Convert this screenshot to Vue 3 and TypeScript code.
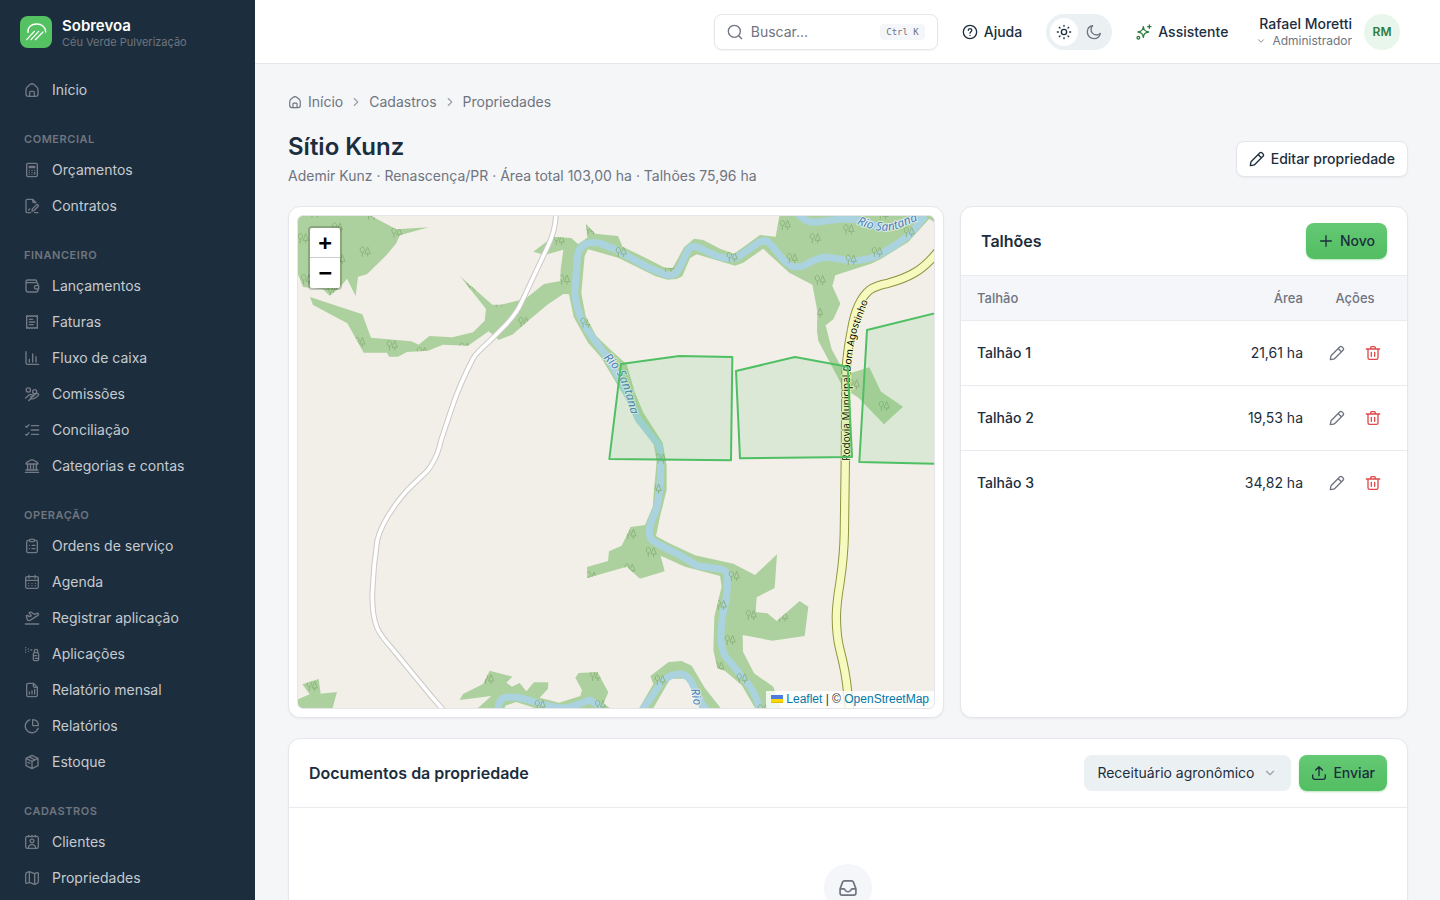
<script setup lang="ts">
import { ref } from 'vue'

interface NavItem {
  label: string
  icon: string
}
interface NavSection {
  title: string
  items: NavItem[]
}
interface Plot {
  name: string
  area: string
}

const circle = (cx: number, cy: number, r: number): string =>
  `M${cx - r} ${cy}a${r} ${r} 0 1 0 ${2 * r} 0a${r} ${r} 0 1 0 ${-2 * r} 0`

const icons: Record<string, string> = {
  home: 'M3 11.5c0-2 .4-2.9 1.9-4.1l4.2-3.5c2.3-1.9 3.5-1.9 5.8 0l4.2 3.5c1.5 1.2 1.9 2.1 1.9 4.1V18c0 2.5-1.3 3.5-3.5 3.5h-11C4.3 21.5 3 20.5 3 18zM8.5 21.5v-6c0-1 .5-1.5 1.5-1.5h4c1 0 1.5.5 1.5 1.5v6',
  calculator: 'M6 2h12c1.3 0 2 .7 2 2v16c0 1.3-.7 2-2 2H6c-1.3 0-2-.7-2-2V4c0-1.3.7-2 2-2zM8 6.5h8v2H8zM8 12.5h.01M12 12.5h.01M16 12.5h.01M8 15.5h.01M12 15.5h.01M16 15.5v2.5M8 18.5h.01M12 18.5h.01',
  contract: 'M10 22H5c-1.3 0-2-.7-2-2V4c0-1.3.7-2 2-2h8l5 5M13 2v3c0 1.3.7 2 2 2h3M7 18l1.5-1.5M21 22h-5M12 19.5l.6-3.2 6-6c1.5-1.4 3.9.9 2.5 2.5l-6 6z',
  wallet: 'M3 5.5C3 4 4 3 5.5 3H17c1.2 0 2 .8 2 2v2H4.5C3.6 7 3 6.4 3 5.5zv12C3 20 4 21 6.5 21H18c2 0 3-1 3-3v-1.5M21 11.5V10c0-2-1-3-3-3M22 11.5h-4a2.5 2.5 0 0 0 0 5h4z',
  invoice: 'M4 21.5V2.5l2 1.3 2-1.3 2 1.3 2-1.3 2 1.3 2-1.3 2 1.3 2-1.3v19l-2-1.3-2 1.3-2-1.3-2 1.3-2-1.3-2 1.3-2-1.3zM8 8h5M8 12h8M8 16h6',
  chart: 'M3 2.5V19c0 1.7.8 2.5 2.5 2.5H22M8 14v4M13 6v12M18 10v8',
  coins: circle(6.5, 6, 3.2) + circle(16, 8.5, 3) + 'M2.5 18l5-4.5c2-1.5 4-.5 6 0 1.5.4 1.5 2.5-.5 2.5h-3M13 15.5l5.5-4c2-1.4 4.5.5 3 2.5-2 2.5-5 5-8 5.2-2 .1-3.5-.4-5 1.3L7 22z',
  checks: 'M11 5.5h11M11 12h11M11 18.5h11M2.5 6.5L4 8l3.5-4M2.5 18.5L4 20l3.5-4',
  bank: 'M2 21.5h20M3 9h18c0-1.5-.3-2-1.5-2.7L13.5 3c-1.2-.6-1.8-.6-3 0l-6 3.3C3.3 7 3 7.5 3 9zM5.5 9v9M9.8 9v9M14.2 9v9M18.5 9v9M3 18h18',
  clipboard: 'M8 3.5H6.5C5 3.5 4 4.5 4 6v13.5C4 21 5 22 6.5 22h11c1.5 0 2.5-1 2.5-2.5V6c0-1.5-1-2.5-2.5-2.5H16M9.5 2h5C15.5 2 16 2.5 16 3.5S15.5 5.5 14.5 5.5h-5C8.5 5.5 8 4.5 8 3.5S8.5 2 9.5 2zM8 11h.01M8 16h.01M12 11h4.5M12 16h4.5',
  calendar: 'M5 4h14c1.5 0 2.5 1 2.5 2.5V19c0 1.5-1 2.5-2.5 2.5H5c-1.5 0-2.5-1-2.5-2.5V6.5C2.5 5 3.5 4 5 4zM7.5 2v4M16.5 2v4M2.5 9.5h19M7 14h.01M12 14h.01M17 14h.01M7 17.5h.01M12 17.5h.01M17 17.5h.01',
  plane: 'M2 21h20M3.5 8.5l1.5-.5 3 2 3-1.3L7.5 4 10 3l6 3.5 3.5-1.4c2-.8 3.5 1.6 1.3 3L9 15.5c-1.8.9-3.2.5-4-1z',
  spray: 'M14 12.5c0-1.8.9-2.5 2.5-2.5h3c1.6 0 2.5.7 2.5 2.5V20c0 1.3-.7 2-2 2h-4c-1.3 0-2-.7-2-2zM15.5 10V7c0-1.3.5-2 2.5-2s2.5.7 2.5 2v3M14 14.5h5M17 18.5h5M2.5 2.5h.01M2.5 6h.01M2.5 9.5h.01M6.5 4.5h.01M6.5 8h.01M10.5 6h1',
  fileChart: 'M6.5 2H14l6 6v11.5c0 1.5-1 2.5-2.5 2.5h-11C5 22 4 21 4 19.5v-15C4 3 5 2 6.5 2zM14 2v4c0 1.3.7 2 2 2h4M8 15v3M12 13v5M16 11v7',
  pie: 'M8.5 2.7a10 10 0 1 0 12.8 12.8M13 2.5v8c0 .6.3.9.9.9h7.6C21.5 6 18.5 2.8 13 2.5z',
  box: 'M12 2l9 4.5v11L12 22l-9-4.5v-11zM3 6.5l9 4.5 9-4.5M12 11v11M7.5 4.3l9 4.5M6 12.5l2.5 1.2',
  contact: 'M5 3.5h14c1.5 0 2.5 1 2.5 2.5v13c0 1.5-1 2.5-2.5 2.5H5c-1.5 0-2.5-1-2.5-2.5V6c0-1.5 1-2.5 2.5-2.5zM7 2v2.5M17 2v2.5M12 2v2.5M6.5 21c.5-4 2.5-5 5.5-5s5 1 5.5 5' + circle(12, 10.5, 2.8),
  map: 'M2.5 7c0-2 .5-2.7 2-3.4L8 2.5l8 3 3-1.2c1.8-.7 2.5-.2 2.5 1.5V17c0 1.8-.5 2.5-2 3.2L16 21.5l-8-3-3 1.2c-1.8.7-2.5.2-2.5-1.5zM8 2.5v16M16 5.5v16',
  search: circle(11, 11, 9) + 'M17.5 17.5l4.5 4.5',
  help: circle(12, 12, 10) + 'M9.5 9.5c0-3.4 5.2-3.2 5.2 0 0 2-2.7 2.1-2.7 4.3M12 17.2h.01',
  sun: circle(12, 12, 4) + 'M12 2v1.5M12 20.5V22M2 12h1.5M20.5 12H22M5 5l1 1M18 18l1 1M19 5l-1 1M6 18l-1 1',
  moon: 'M21.5 14.1A7.5 7.5 0 0 1 9.9 2.5C5.4 3.4 2 7.2 2 12c0 5.5 4.5 10 10 10 4.8 0 8.6-3.4 9.5-7.9z',
  sparkle: 'M11 4c.8 5.5 2.5 7.2 8 8-5.5.8-7.2 2.5-8 8-.8-5.5-2.5-7.2-8-8 5.5-.8 7.2-2.5 8-8zM20 1.5v5M17.5 4h5' + circle(3.5, 20.5, 2),
  chevronDown: 'M6 9l6 6 6-6',
  chevronRight: 'M9 6l6 6-6 6',
  pencil: 'M2 22l.8-5c.1-.7.4-1.200.9-1.700L16 3c1.200-1.200 2.500-1.200 3.700 0l1.300 1.300c1.200 1.200 1.200 2.500 0 3.700L8.700 20.300c-.5.5-1 .8-1.700.9zM14 5.500l4.500 4.500',
  trash: 'M19.5 6v13c0 1.7-1 2.5-2.5 2.5H7c-1.5 0-2.5-.8-2.5-2.5V6M2 6h20M8.500 6V4c0-1 .5-1.500 1.500-1.500h4c1 0 1.500.5 1.500 1.500v2M9.500 11v6M14.500 11v6',
  plus: 'M12 4v16M4 12h16',
  upload: 'M12 16V3M7 7.5L12 2.5l5 5M2.5 15v3c0 2.3 1.2 3.5 3.5 3.5h12c2.3 0 3.5-1.2 3.5-3.5v-3',
  inbox: 'M2.5 13l3-8c.5-1.3 1-1.5 2.3-1.5h8.4c1.3 0 1.8.2 2.3 1.5l3 8v5c0 1.7-.8 2.5-2.5 2.5H5c-1.7 0-2.5-.8-2.5-2.5zM2.5 13H7c1.5 0 1.5 3.5 5 3.5s3.5-3.5 5-3.5h4.5',
}

const sections: NavSection[] = [
  {
    title: 'Comercial',
    items: [
      { label: 'Orçamentos', icon: 'calculator' },
      { label: 'Contratos', icon: 'contract' },
    ],
  },
  {
    title: 'Financeiro',
    items: [
      { label: 'Lançamentos', icon: 'wallet' },
      { label: 'Faturas', icon: 'invoice' },
      { label: 'Fluxo de caixa', icon: 'chart' },
      { label: 'Comissões', icon: 'coins' },
      { label: 'Conciliação', icon: 'checks' },
      { label: 'Categorias e contas', icon: 'bank' },
    ],
  },
  {
    title: 'Operação',
    items: [
      { label: 'Ordens de serviço', icon: 'clipboard' },
      { label: 'Agenda', icon: 'calendar' },
      { label: 'Registrar aplicação', icon: 'plane' },
      { label: 'Aplicações', icon: 'spray' },
      { label: 'Relatório mensal', icon: 'fileChart' },
      { label: 'Relatórios', icon: 'pie' },
      { label: 'Estoque', icon: 'box' },
    ],
  },
  {
    title: 'Cadastros',
    items: [
      { label: 'Clientes', icon: 'contact' },
      { label: 'Propriedades', icon: 'map' },
    ],
  },
]

const plots: Plot[] = [
  { name: 'Talhão 1', area: '21,61 ha' },
  { name: 'Talhão 2', area: '19,53 ha' },
  { name: 'Talhão 3', area: '34,82 ha' },
]

const query = ref('')
const docType = ref('Receituário agronômico')
const theme = ref<'light' | 'dark'>('light')

// Map geometry, in the units of the canvas viewBox.
const forest = [
  'M30 30H250L325 70 422 64 335 88 325 112 295 148 237 205 210 212 203 270 177 218 155 245 125 269 105 250 45 243 30 205Z',
  'M66 273L223 325 249 395 370 406 392 416 424 390 493 394 555 379 590 344 594 309 516 211 613 296 640 296 712 278 768 234 817 225 818 190 826 131 770 147 736 137 795 92 850 96 870 114 898 95 894 54 922 83 990 90 1004 122 1066 152 1131 185 1154 186 1188 124 1218 98 1246 102 1296 128 1338 143 1416 87 1463 92 1474 30H1938V48L1924 38 1861 108 1779 159 1749 173 1642 208 1633 240 1657 293 1636 340 1613 358 1631 430 1654 472 1691 500 1744 484 1779 557 1845 602 1788 655 1711 575 1666 545 1591 405 1587 375 1588 315 1573 236 1504 200 1446 148 1426 128 1366 170 1341 179 1226 145 1206 157 1183 211 1166 219 1138 221 1101 210 1036 178 990 155 900 130 890 150 880 262 893 330 925 390 966 430 1016 475 1041 560 1066 620 1124 710 1136 780 1136 852 1116 932 1104 990 1141 1010 1221 1048 1336 1073 1401 1107 1467 1045 1460 1146 1406 1174 1403 1218 1438 1222 1466 1245 1535 1185 1561 1202 1550 1290 1453 1304 1364 1287 1365 1337 1398 1402 1456 1442 1478 1506H1401L1361 1437 1311 1395 1288 1387 1276 1332 1279 1232 1291 1182 1301 1142 1296 1110 1191 1082 1118 1049 1130 1096 1056 1118 1016 1082 898 1116 897 1083 960 1065 963 1036 1001 1019 1028 963 1071 957 1094 902 1106 762 1096 710 1041 625 990 540 940 455 900 410 857 333 843 265 826 264 780 295 735 332 673 386 632 402 602 376 540 419 465 416 420 434 357 438 330 452 303 452 297 440H227L178 352 75 297Z',
  'M30 1480L65 1465 43 1435 92 1419 98 1463 147 1458 134 1506H30Z',
  'M515 1482L525 1464 585 1434 605 1394 673 1412 655 1430 672 1442 695 1431 715 1456 738 1429H781L780 1448 755 1475 813 1490 877 1470 882 1452 862 1415 872 1401 928 1398 961 1459 947 1492 965 1506H740L685 1488 652 1499 650 1506H570L610 1470Z',
  'M1054 1506L1096 1434 1087 1410 1142 1368 1181 1365 1211 1379 1251 1447 1298 1506H1234L1222 1456 1200 1418H1147L1096 1506Z',
].join('')

const river = [
  'M1911 30L1866 85 1826 115 1776 145Q1750 160 1696 165L1611 153Q1585 158 1560 172T1521 182Q1505 182 1485 160L1450 118Q1435 98 1415 108L1341 158Q1310 158 1286 150L1226 122Q1208 120 1200 132L1178 178Q1165 212 1136 207L1086 187 986 132 940 113Q905 104 886 118 870 130 868 155L860 262Q866 310 883 345T960 455L1016 560 1051 640 1106 710Q1118 725 1118 750V790Q1118 860 1104 912L1088 952Q1078 990 1092 1002T1166 1042L1228 1079 1301 1090Q1320 1095 1318 1112 1320 1160 1310 1200T1299 1290 1320 1360L1386 1442Q1408 1475 1416 1515',
  'M1531 24Q1550 48 1580 49L1666 38 1706 41Q1750 50 1770 63T1911 22',
  'M630 1512Q632 1476 655 1474 690 1470 740 1488T840 1506L905 1482 930 1497 945 1512',
  'M1062 1512L1091 1472 1122 1426Q1150 1402 1180 1404 1205 1410 1216 1440T1254 1512',
].join('')

const dirtRoad =
  'M804 24Q802 75 780 120L700 290Q688 320 650 360L600 410Q565 440 555 458 515 535 490 610L460 700Q450 745 434 770 425 790 400 812L360 850Q325 890 320 900 280 955 268 1002 256 1080 253 1162 252 1230 268 1267 275 1285 310 1325L435 1477 468 1514'

const highway =
  'M1950 136Q1915 180 1880 200 1850 218 1800 232 1765 238 1745 252 1705 285 1691 370 1677 440 1674 500L1672 762 1669 980Q1668 1050 1656 1130 1646 1190 1645 1230 1645 1290 1656 1332 1674 1400 1679 1460L1685 1514'

const fields: string[] = [
  'M999 474L1174 450 1333 453 1329 763 964 759Z',
  'M1344 495L1521 453 1679 482 1692 753 1356 757Z',
  'M2080 288L1737 372 1714 768 2080 776Z',
]

const trees: [number, number][] = [
  [45, 97], [148, 65], [231, 137], [326, 80], [55, 220], [155, 160], [135, 255], [829, 221], [707, 348],
  [312, 418], [215, 408], [402, 438], [553, 240], [633, 287], [813, 102], [908, 70], [893, 350], [530, 425],
  [80, 20], [250, 26], [999, 138], [1141, 182], [1332, 153], [1491, 57], [1581, 97], [1682, 70], [1512, 157],
  [1689, 161], [1767, 138], [1863, 78], [1596, 222], [1588, 320], [1788, 600], [1698, 535], [1785, 25],
  [1118, 758], [1104, 848], [1028, 984], [1089, 1038], [1338, 1110], [1299, 1197], [1389, 1227], [1326, 1302],
  [1362, 1417], [1116, 1422], [1483, 1232], [1292, 1382], [1025, 1088], [72, 1440], [601, 1419], [922, 1410],
  [756, 1497], [937, 1497], [910, 1112], [1425, 1510],
]
</script>

<template>
  <div class="shell">
    <aside class="sidebar">
      <div class="brand">
        <svg class="brand-mark" viewBox="0 0 96 96" aria-hidden="true">
          <rect width="96" height="96" rx="24" />
          <path d="M24 49C22 34 34 24 50 24S77 34 77 48M20 71L43 46M33 71L56 46M46 71L69 48" />
        </svg>
        <div class="brand-text">
          <strong>Sobrevoa</strong>
          <span>Céu Verde Pulverização</span>
        </div>
      </div>
      <nav class="nav" aria-label="Principal">
        <a class="nav-link" href="#inicio">
          <svg class="icon" viewBox="0 0 24 24" aria-hidden="true"><path :d="icons.home" /></svg>
          Início
        </a>
        <section v-for="section in sections" :key="section.title">
          <h2 class="nav-title">{{ section.title }}</h2>
          <a v-for="item in section.items" :key="item.label" class="nav-link" href="#">
            <svg class="icon" viewBox="0 0 24 24" aria-hidden="true"><path :d="icons[item.icon]" /></svg>
            {{ item.label }}
          </a>
        </section>
      </nav>
    </aside>

    <div class="page">
      <header class="topbar">
        <label class="search">
          <svg class="icon" viewBox="0 0 24 24" aria-hidden="true"><path :d="icons.search" /></svg>
          <input v-model="query" type="text" placeholder="Buscar..." aria-label="Buscar" />
          <kbd>Ctrl K</kbd>
        </label>
        <button class="ghost" type="button">
          <svg class="icon" viewBox="0 0 24 24" aria-hidden="true"><path :d="icons.help" /></svg>
          Ajuda
        </button>
        <div class="theme" role="group" aria-label="Tema">
          <button type="button" :class="{ on: theme === 'light' }" aria-label="Tema claro" @click="theme = 'light'">
            <svg class="icon" viewBox="0 0 24 24" aria-hidden="true"><path :d="icons.sun" /></svg>
          </button>
          <button type="button" :class="{ on: theme === 'dark' }" aria-label="Tema escuro" @click="theme = 'dark'">
            <svg class="icon" viewBox="0 0 24 24" aria-hidden="true"><path :d="icons.moon" /></svg>
          </button>
        </div>
        <button class="ghost assistant" type="button">
          <svg class="icon" viewBox="0 0 24 24" aria-hidden="true"><path :d="icons.sparkle" /></svg>
          Assistente
        </button>
        <button class="account" type="button">
          <span class="account-text">
            <span class="account-name">Rafael Moretti</span>
            <span class="account-role">
              <svg class="icon tiny" viewBox="0 0 24 24" aria-hidden="true"><path :d="icons.chevronDown" /></svg>
              Administrador
            </span>
          </span>
          <span class="avatar">RM</span>
        </button>
      </header>

      <main class="content">
        <nav class="crumbs" aria-label="Trilha">
          <a href="#inicio">
            <svg class="icon small" viewBox="0 0 24 24" aria-hidden="true"><path :d="icons.home" /></svg>
            Início
          </a>
          <svg class="icon small sep" viewBox="0 0 24 24" aria-hidden="true"><path :d="icons.chevronRight" /></svg>
          <a href="#cadastros">Cadastros</a>
          <svg class="icon small sep" viewBox="0 0 24 24" aria-hidden="true"><path :d="icons.chevronRight" /></svg>
          <a href="#propriedades">Propriedades</a>
        </nav>

        <div class="heading">
          <div>
            <h1>Sítio Kunz</h1>
            <p>Ademir Kunz · Renascença/PR · Área total 103,00 ha · Talhões 75,96 ha</p>
          </div>
          <button class="btn outline" type="button">
            <svg class="icon" viewBox="0 0 24 24" aria-hidden="true"><path :d="icons.pencil" /></svg>
            Editar propriedade
          </button>
        </div>

        <div class="columns">
          <section class="card map-card" aria-label="Mapa da propriedade">
            <div class="map">
              <svg class="map-canvas" viewBox="30 30 1908 1476" preserveAspectRatio="xMidYMid slice" aria-hidden="true">
                <defs>
                  <clipPath id="forest-clip"><path :d="forest" /></clipPath>
                  <g id="tree">
                    <path d="M-8 15V2M-8 2C-17 2-16-14-8-14S1 2-8 2M8 15V6M0 6H16L8-14Z" />
                  </g>
                  <path id="river-label" d="M946 456L978 490Q1008 530 1032 640" />
                  <path id="river-label-north" d="M1706 54Q1780 86 1830 68L1960 14" />
                  <path id="river-label-south" d="M1208 1450L1226 1540" />
                  <path id="highway-label" d="M1687 764V500Q1693 430 1708 370L1740 285 1762 240" />
                </defs>
                <path class="forest" :d="forest" />
                <path class="river" :d="river" />
                <g class="trees" clip-path="url(#forest-clip)">
                  <use v-for="([x, y], i) in trees" :key="i" href="#tree" :x="x" :y="y" />
                </g>
                <path class="dirt-casing" :d="dirtRoad" />
                <path class="dirt" :d="dirtRoad" />
                <path class="highway-casing" :d="highway" />
                <path class="highway" :d="highway" />
                <text class="river-text"><textPath href="#river-label">Rio Santana</textPath></text>
                <text class="river-text"><textPath href="#river-label-north">Rio Santana</textPath></text>
                <text class="river-text"><textPath href="#river-label-south">Rio</textPath></text>
                <text class="highway-text"><textPath href="#highway-label">Rodovia Municipal Dom Agostinho</textPath></text>
                <path v-for="field in fields" :key="field" class="field" :d="field" />
              </svg>
              <div class="zoom">
                <button type="button" aria-label="Aproximar">+</button>
                <button type="button" aria-label="Afastar">−</button>
              </div>
              <div class="credits">
                <svg viewBox="0 0 12 8" aria-hidden="true">
                  <path fill="#4c7be1" d="M0 0h12v4H0z" />
                  <path fill="#ffd500" d="M0 4h12v3H0z" />
                  <path fill="#e0bc00" d="M0 7h12v1H0z" />
                </svg>
                <a href="#leaflet">Leaflet</a> | © <a href="#osm">OpenStreetMap</a>
              </div>
            </div>
          </section>

          <section class="card">
            <div class="card-head">
              <h2>Talhões</h2>
              <button class="btn primary" type="button">
                <svg class="icon" viewBox="0 0 24 24" aria-hidden="true"><path :d="icons.plus" /></svg>
                Novo
              </button>
            </div>
            <table>
              <thead>
                <tr>
                  <th scope="col">Talhão</th>
                  <th class="num" scope="col">Área</th>
                  <th class="actions" scope="col">Ações</th>
                </tr>
              </thead>
              <tbody>
                <tr v-for="plot in plots" :key="plot.name">
                  <td>{{ plot.name }}</td>
                  <td class="num">{{ plot.area }}</td>
                  <td class="actions">
                    <div class="row-tools">
                      <button type="button" :aria-label="`Editar ${plot.name}`">
                        <svg class="icon" viewBox="0 0 24 24" aria-hidden="true"><path :d="icons.pencil" /></svg>
                      </button>
                      <button class="danger" type="button" :aria-label="`Excluir ${plot.name}`">
                        <svg class="icon" viewBox="0 0 24 24" aria-hidden="true"><path :d="icons.trash" /></svg>
                      </button>
                    </div>
                  </td>
                </tr>
              </tbody>
            </table>
          </section>
        </div>

        <section class="card">
          <div class="card-head">
            <h2>Documentos da propriedade</h2>
            <div class="tools">
              <div class="select">
                <select v-model="docType" aria-label="Tipo de documento">
                  <option>Receituário agronômico</option>
                </select>
                <svg class="icon small" viewBox="0 0 24 24" aria-hidden="true"><path :d="icons.chevronDown" /></svg>
              </div>
              <button class="btn primary" type="button">
                <svg class="icon" viewBox="0 0 24 24" aria-hidden="true"><path :d="icons.upload" /></svg>
                Enviar
              </button>
            </div>
          </div>
          <div class="empty">
            <span class="empty-icon">
              <svg class="icon large" viewBox="0 0 24 24" aria-hidden="true"><path :d="icons.inbox" /></svg>
            </span>
          </div>
        </section>
      </main>
    </div>
  </div>
</template>

<style>
body {
  background: #f5f6f8;
}
</style>

<style scoped>
.shell {
  --ink: #1c2e3d;
  --muted: #6f7480;
  --line: #e4e6eb;
  display: grid;
  grid-template-columns: 255px minmax(0, 1fr);
  height: 100vh;
  overflow: hidden;
  color: var(--ink);
  font-family: Inter, "Liberation Sans", sans-serif;
  font-size: 14px;
  line-height: 20px;
}
.shell *,
.shell *::before {
  box-sizing: border-box;
}
h1,
h2,
p {
  margin: 0;
}
a {
  color: inherit;
  text-decoration: none;
}
button,
input,
select {
  border: 0;
  margin: 0;
  padding: 0;
  background: none;
  color: inherit;
  font: inherit;
}
.icon {
  flex: none;
  display: block;
  width: 16px;
  height: 16px;
  fill: none;
  stroke: currentColor;
  stroke-width: 2;
  stroke-linecap: round;
  stroke-linejoin: round;
}
.icon.small {
  width: 14px;
  height: 14px;
}
.icon.tiny {
  width: 10px;
  height: 10px;
}
.icon.large {
  width: 20px;
  height: 20px;
}

/* Sidebar */
.sidebar {
  display: flex;
  flex-direction: column;
  min-height: 0;
  background: #1c2e3d;
}
.brand {
  display: flex;
  flex: none;
  align-items: center;
  gap: 10px;
  height: 64px;
  padding: 0 20px;
}
.brand-mark {
  width: 32px;
  height: 32px;
}
.brand-mark rect {
  fill: #54c162;
}
.brand-mark path {
  fill: none;
  stroke: #fff;
  stroke-width: 4;
  stroke-linecap: round;
}
.brand-text {
  display: flex;
  flex-direction: column;
  padding-top: 2px;
}
.brand-text strong {
  color: #fff;
  font-size: 15px;
  font-weight: 600;
  line-height: 18px;
}
.brand-text span {
  color: #70757f;
  font-size: 11px;
  line-height: 14px;
}
.nav {
  flex: 1;
  min-height: 0;
  overflow: hidden;
  padding: 8px 12px;
}
.nav-link {
  display: flex;
  align-items: center;
  gap: 12px;
  height: 36px;
  padding: 0 12px;
  color: #c6cad0;
}
.nav-link .icon {
  color: #747a85;
}
.nav-title {
  padding: 24px 12px 6px;
  color: #70757f;
  font-size: 11px;
  font-weight: 600;
  letter-spacing: 0.05em;
  line-height: 14px;
  text-transform: uppercase;
}

/* Top bar */
.page {
  display: flex;
  flex-direction: column;
  min-width: 0;
  min-height: 0;
}
.topbar {
  display: flex;
  flex: none;
  align-items: center;
  justify-content: flex-end;
  height: 64px;
  padding: 0 40px;
  border-bottom: 1px solid var(--line);
  background: #fff;
}
.search {
  display: flex;
  align-items: center;
  gap: 8px;
  width: 224px;
  height: 36px;
  margin-right: 24px;
  padding: 0 12px;
  border: 1px solid var(--line);
  border-radius: 8px;
  box-shadow: 0 1px 2px rgb(28 46 61 / 6%);
  color: var(--muted);
}
.search input {
  flex: 1;
  min-width: 0;
  outline: 0;
}
.search input::placeholder {
  color: var(--muted);
  opacity: 1;
}
kbd {
  padding: 0 6px;
  border-radius: 4px;
  background: #f5f6fa;
  font-family: "DejaVu Sans Mono", monospace;
  font-size: 9px;
  line-height: 16px;
}
.ghost {
  display: flex;
  align-items: center;
  gap: 6px;
  font-weight: 500;
}
.assistant .icon {
  color: #2f7d3f;
}
.theme {
  display: flex;
  gap: 2px;
  height: 36px;
  margin: 0 24px;
  padding: 4px;
  border-radius: 18px;
  background: #ebf0f3;
}
.theme button {
  display: grid;
  place-items: center;
  width: 28px;
  height: 28px;
  border-radius: 14px;
  color: var(--muted);
}
.theme .on {
  background: #fff;
  color: var(--ink);
}
.account {
  display: flex;
  align-items: center;
  gap: 12px;
  margin-left: 28px;
}
.account-text {
  display: flex;
  flex-direction: column;
  align-items: flex-end;
}
.account-name {
  font-weight: 500;
  line-height: 18px;
}
.account-role {
  display: flex;
  align-items: center;
  gap: 6px;
  color: var(--muted);
  font-size: 12px;
  line-height: 16px;
}
.avatar {
  display: grid;
  place-items: center;
  width: 36px;
  height: 36px;
  border-radius: 50%;
  background: #e8f6eb;
  color: #2f7d3f;
  font-size: 12px;
  font-weight: 600;
}

/* Page content */
.content {
  flex: 1;
  min-height: 0;
  overflow: hidden;
  padding: 28px 32px 32px 33px;
}
.crumbs {
  display: flex;
  align-items: center;
  gap: 6px;
  color: var(--muted);
}
.crumbs a {
  display: flex;
  align-items: center;
  gap: 6px;
}
.crumbs .sep {
  color: #9a9fa9;
}
.heading {
  display: flex;
  align-items: center;
  justify-content: space-between;
  gap: 16px;
  margin: 20px 0;
}
h1 {
  font-size: 24px;
  font-weight: 600;
  line-height: 30px;
}
.heading p {
  margin-top: 4px;
  color: var(--muted);
}
.btn {
  display: flex;
  align-items: center;
  gap: 6px;
  height: 36px;
  padding: 0 12px;
  border-radius: 8px;
  font-weight: 500;
}
.outline {
  border: 1px solid var(--line);
  background: #fff;
  box-shadow: 0 1px 2px rgb(28 46 61 / 6%);
}
.primary {
  background: linear-gradient(#64c974, #53be62);
  box-shadow: 0 1px 2px rgb(83 190 98 / 40%);
}
.columns {
  display: grid;
  grid-template-columns: minmax(0, 1fr) 448px;
  gap: 16px;
  margin-bottom: 20px;
}
.card {
  overflow: hidden;
  border: 1px solid var(--line);
  border-radius: 12px;
  background: #fff;
  box-shadow: 0 1px 2px rgb(28 46 61 / 6%);
}
.card-head {
  display: flex;
  align-items: center;
  justify-content: space-between;
  padding: 16px 20px;
  border-bottom: 1px solid #e9ebef;
}
.card-head h2 {
  font-size: 16px;
  font-weight: 600;
  line-height: 24px;
}

/* Map */
.map-card {
  padding: 8px;
}
.map {
  position: relative;
  height: 494px;
  overflow: hidden;
  border: 1px solid var(--line);
  border-radius: 6px;
  background: #f2efe9;
}
.map-canvas {
  display: block;
  width: 100%;
  height: 100%;
}
.forest {
  fill: #add19e;
}
.trees {
  fill: none;
  stroke: #8db47d;
  stroke-width: 3;
}
.river,
.dirt,
.dirt-casing,
.highway,
.highway-casing {
  fill: none;
  stroke-linejoin: round;
}
.river {
  stroke: #aad3df;
  stroke-width: 21;
}
.dirt-casing {
  stroke: #cbc9c6;
  stroke-width: 17;
}
.dirt {
  stroke: #fff;
  stroke-width: 11;
}
.highway-casing {
  stroke: #8f9440;
  stroke-width: 28;
}
.highway {
  stroke: #f7fabf;
  stroke-width: 22;
}
.river-text,
.highway-text {
  font-family: "Noto Sans", sans-serif;
  paint-order: stroke;
  stroke-linejoin: round;
}
.river-text {
  fill: #4d80b3;
  stroke: rgb(255 255 255 / 60%);
  stroke-width: 6;
  font-size: 36px;
  font-style: italic;
}
.highway-text {
  fill: #000;
  stroke: #f7fabf;
  stroke-width: 6;
  font-size: 30px;
}
.field {
  fill: rgb(84 193 98 / 15%);
  stroke: #4fbf64;
  stroke-width: 6;
  stroke-linejoin: round;
}
.zoom {
  position: absolute;
  top: 10px;
  left: 10px;
  display: flex;
  flex-direction: column;
  border: 2px solid rgb(0 0 0 / 20%);
  border-radius: 4px;
  background-clip: padding-box;
}
.zoom button {
  width: 30px;
  height: 30px;
  background: #fff;
  color: #000;
  font: bold 22px/30px "DejaVu Sans Mono", monospace;
}
.zoom button:first-child {
  border-bottom: 1px solid #ccc;
  border-radius: 2px 2px 0 0;
}
.zoom button:last-child {
  border-radius: 0 0 2px 2px;
}
.credits {
  position: absolute;
  right: 0;
  bottom: 0;
  padding: 0 5px;
  background: rgb(255 255 255 / 80%);
  color: #333;
  font: 12px/17px "Liberation Sans", sans-serif;
}
.credits svg {
  width: 12px;
  height: 8px;
  margin-right: 3px;
}
.credits a {
  color: #0078a8;
}

/* Plots table */
table {
  width: 100%;
  border-spacing: 0;
}
th,
td {
  padding: 0 16px;
  border-bottom: 1px solid #e9ebef;
  text-align: left;
}
th {
  height: 45px;
  background: #f5f6fa;
  color: var(--muted);
  font-size: 13px;
  font-weight: 500;
}
td {
  height: 65px;
}
tbody tr:last-child td {
  border-bottom-color: transparent;
}
td:first-child {
  font-weight: 500;
}
th.num,
td.num {
  text-align: right;
}
th.actions,
td.actions {
  width: 88px;
  padding-left: 0;
  text-align: center;
}
.row-tools {
  display: flex;
}
.row-tools button {
  display: grid;
  place-items: center;
  width: 36px;
  height: 36px;
  color: var(--muted);
}
.row-tools .danger {
  color: #e0484b;
}

/* Documents */
.tools {
  display: flex;
  gap: 8px;
}
.select {
  position: relative;
}
.select select {
  height: 36px;
  padding: 0 36px 0 13px;
  border-radius: 8px;
  background: #ebf0f3;
  appearance: none;
}
.select .icon {
  position: absolute;
  top: 11px;
  right: 14px;
  color: #9a9fa9;
  pointer-events: none;
}
.empty {
  display: flex;
  flex-direction: column;
  align-items: center;
  padding: 56px 20px;
}
.empty-icon {
  display: grid;
  place-items: center;
  width: 48px;
  height: 48px;
  border-radius: 50%;
  background: #f5f6fa;
  color: var(--muted);
}
</style>
